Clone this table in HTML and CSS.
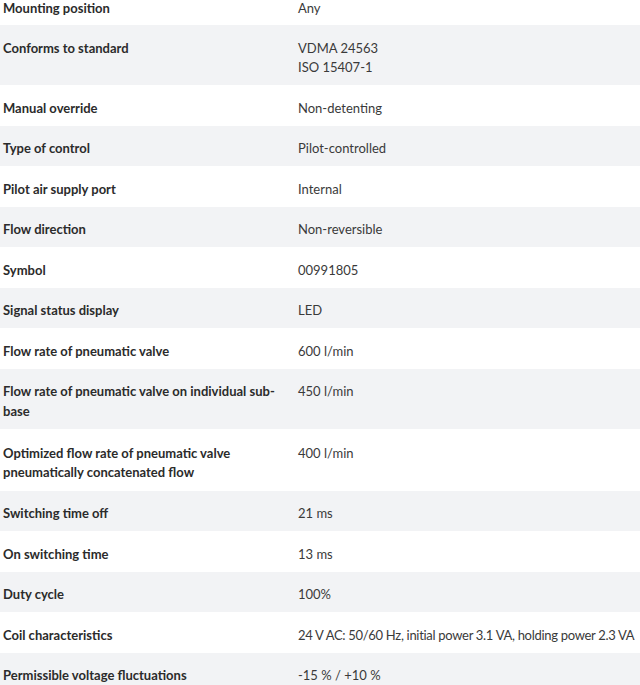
FILE: index.html
```html
<!DOCTYPE html>
<html>
<head>
<meta charset="utf-8">
<link rel="stylesheet" href="styles.css">
</head>
<body>
<div class="specs">
  <div class="row row--first"><div class="label">Mounting position</div><div class="value">Any</div></div>
  <div class="row alt"><div class="label">Conforms to standard</div><div class="value">VDMA 24563<br>ISO 15407-1</div></div>
  <div class="row"><div class="label">Manual override</div><div class="value">Non-detenting</div></div>
  <div class="row alt"><div class="label">Type of control</div><div class="value">Pilot-controlled</div></div>
  <div class="row"><div class="label">Pilot air supply port</div><div class="value">Internal</div></div>
  <div class="row alt"><div class="label">Flow direction</div><div class="value">Non-reversible</div></div>
  <div class="row"><div class="label">Symbol</div><div class="value">00991805</div></div>
  <div class="row alt"><div class="label">Signal status display</div><div class="value">LED</div></div>
  <div class="row"><div class="label">Flow rate of pneumatic valve</div><div class="value">600 l/min</div></div>
  <div class="row alt"><div class="label">Flow rate of pneumatic valve on individual sub-base</div><div class="value">450 l/min</div></div>
  <div class="row row--tall"><div class="label">Optimized flow rate of pneumatic valve pneumatically concatenated flow</div><div class="value">400 l/min</div></div>
  <div class="row alt"><div class="label">Switching time off</div><div class="value">21 ms</div></div>
  <div class="row"><div class="label">On switching time</div><div class="value">13 ms</div></div>
  <div class="row alt"><div class="label">Duty cycle</div><div class="value">100%</div></div>
  <div class="row"><div class="label">Coil characteristics</div><div class="value value--long">24 V AC: 50/60 Hz, initial power 3.1 VA, holding power 2.3 VA</div></div>
  <div class="row alt"><div class="label">Permissible voltage fluctuations</div><div class="value">-15 % / +10 %</div></div>
</div>
</body>
</html>
```
FILE: styles.css
```css
html, body {
  margin: 0;
  padding: 0;
  background: #ffffff;
}
body {
  font-family: Lato, "Noto Sans", sans-serif;
  font-size: 13px;
  color: #333333;
  overflow: hidden;
}
.specs {
  display: flex;
  flex-direction: column;
}
.row {
  display: flex;
  padding: 13.5px 0 7.5px 3px;
  line-height: 19.5px;
  background: #ffffff;
}
.row.alt {
  background: #f2f3f5;
}
.row--first {
  padding-top: 0;
  padding-bottom: 7px;
  margin-top: -1.5px;
}
.row--tall {
  padding-top: 15px;
  padding-bottom: 8px;
}
.label {
  width: 295px;
  flex: none;
  padding-right: 20px;
  box-sizing: border-box;
  font-weight: 700;
  color: #2b2b2b;
}
.value {
  flex: 1;
  color: #3a3a3a;
  white-space: nowrap;
}
.value--long {
  letter-spacing: -0.3px;
}
```
